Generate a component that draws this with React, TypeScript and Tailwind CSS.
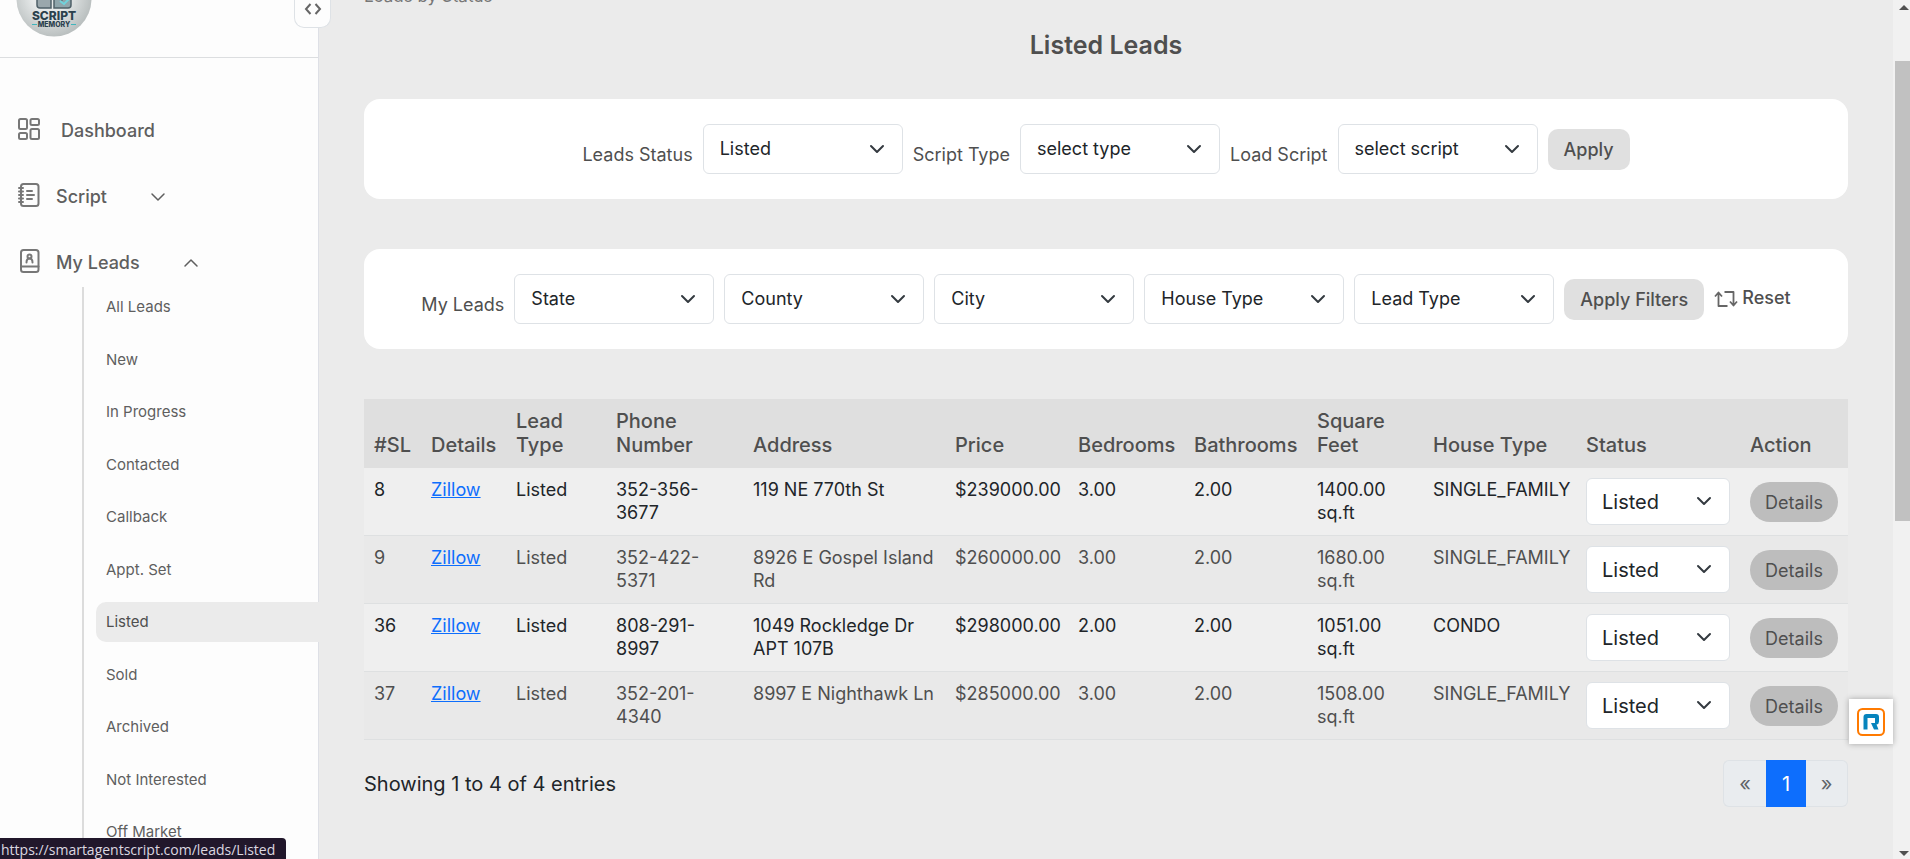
import { clsx } from "clsx";

const subLinks = [
  "All Leads",
  "New",
  "In Progress",
  "Contacted",
  "Callback",
  "Appt. Set",
  "Listed",
  "Sold",
  "Archived",
  "Not Interested",
  "Off Market",
];

const columns = [
  { title: "#SL", width: "w-[57px]" },
  { title: "Details", width: "w-[85px]" },
  { title: "Lead Type", width: "w-[100px]" },
  { title: "Phone Number", width: "w-[137px]" },
  { title: "Address", width: "w-[202px]" },
  { title: "Price", width: "w-[123px]" },
  { title: "Bedrooms", width: "w-[116px]" },
  { title: "Bathrooms", width: "w-[123px]" },
  { title: "Square Feet", width: "w-[116px]" },
  { title: "House Type", width: "w-[153px]" },
  { title: "Status", width: "w-[164px]" },
  { title: "Action", width: "w-[108px]" },
];

const leads = [
  { id: 8, phone: "352-356-3677", address: "119 NE 770th St", price: "$239000.00", beds: "3.00", baths: "2.00", sqft: "1400.00", house: "SINGLE_FAMILY" },
  { id: 9, phone: "352-422-5371", address: "8926 E Gospel Island Rd", price: "$260000.00", beds: "3.00", baths: "2.00", sqft: "1680.00", house: "SINGLE_FAMILY" },
  { id: 36, phone: "808-291-8997", address: "1049 Rockledge Dr APT 107B", price: "$298000.00", beds: "2.00", baths: "2.00", sqft: "1051.00", house: "CONDO" },
  { id: 37, phone: "352-201-4340", address: "8997 E Nighthawk Ln", price: "$285000.00", beds: "3.00", baths: "2.00", sqft: "1508.00", house: "SINGLE_FAMILY" },
];

function Chevron({ up = false, className = "" }: { up?: boolean; className?: string }) {
  return (
    <svg viewBox="0 0 16 16" fill="none" stroke="currentColor" strokeLinecap="round" strokeLinejoin="round" className={className}>
      <path d={up ? "m2 11 6-6 6 6" : "m2 5 6 6 6-6"} />
    </svg>
  );
}

function Select({ id, value, label }: { id: string; value: string; label?: string }) {
  return (
    <div className="relative w-[200px]">
      <select
        id={id}
        aria-label={label}
        className="h-[50px] w-full appearance-none rounded-md border border-[#dee2e6] bg-white pr-10 pb-px pl-4 text-lg text-[#212529]"
      >
        <option>{value}</option>
      </select>
      <Chevron className="pointer-events-none absolute top-[17px] right-[18px] size-4 stroke-2 text-[#343a40]" />
    </div>
  );
}

function DashboardIcon() {
  return (
    <svg viewBox="0 0 24 24" fill="none" stroke="#777" strokeWidth="2" className="size-6">
      <rect x="2" y="2" width="8" height="10" rx="1.5" />
      <rect x="13.5" y="2" width="8.5" height="6" rx="1.5" />
      <rect x="2" y="16" width="8" height="6" rx="1.5" />
      <rect x="13.5" y="12" width="8.5" height="10" rx="1.5" />
    </svg>
  );
}

function NotebookIcon() {
  return (
    <svg viewBox="0 0 24 24" fill="none" stroke="#777" strokeWidth="2" strokeLinecap="round" className="size-6">
      <rect x="4" y="1" width="17.5" height="22" rx="2.5" />
      <path d="M2 5h4M2 8.5h4M2 12h4M2 15.5h4M2 19h4M10 8h5M10 12h7M10 16h5" />
    </svg>
  );
}

function ContactIcon() {
  return (
    <svg viewBox="0 0 24 24" fill="none" stroke="#777" strokeWidth="2" strokeLinecap="round" className="size-6">
      <rect x="4" y="1" width="17.5" height="22" rx="2.5" />
      <path d="M4 17.5h17.5" />
      <circle cx="12.5" cy="7.5" r="2" />
      <path d="M9.5 13.5c0-2.5 1-4 3-4s3 1.500 3 4" />
    </svg>
  );
}

function Logo() {
  return (
    <svg viewBox="0 0 76 76" className="size-[76px] shrink-0" role="img" aria-label="Script Memory">
      <defs>
        <radialGradient id="disc" cx="45%" cy="45%" r="60%">
          <stop offset="0.4" stopColor="#e6e9e9" />
          <stop offset="1" stopColor="#b4baba" />
        </radialGradient>
      </defs>
      <circle cx="38" cy="38" r="37.5" fill="url(#disc)" />
      <path d="M21 30v14q0 3 3 3h11V38H24V30z" fill="#9aa7ac" stroke="#4f6068" strokeWidth="1.5" />
      <path d="M38 30v17h14q3 0 3-3V30l-9 9-4-4" fill="#8fa5ab" stroke="#4f6068" strokeWidth="1.5" />
      <path d="m44 40 4 3 8-8" fill="none" stroke="#6fd3dc" strokeWidth="2" />
      <text x="38" y="59" textAnchor="middle" fontSize="12" fontWeight="800" fill="#2b414d" fontFamily="Inter, sans-serif">
        SCRIPT
      </text>
      <path d="M16 63.5h5M55 63.5h5" stroke="#3fb5bd" />
      <text x="38" y="66" textAnchor="middle" fontSize="7" fontWeight="800" fill="#2b414d" fontFamily="Inter, sans-serif">
        MEMORY
      </text>
    </svg>
  );
}

function Sidebar() {
  return (
    <aside className="relative w-[319px] shrink-0 border-r border-[#dee0e6] bg-[#fdfdfd] text-[#5f5f5f]">
      <div className="flex h-[58px] items-end border-b border-[#dcdee0] pb-5 pl-4">
        <Logo />
      </div>
      <button
        aria-label="Collapse sidebar"
        className="absolute top-0 -right-[13px] flex h-7 w-[37px] items-start justify-center rounded-b-[10px] border border-t-0 border-[#dee2e6] bg-[#fdfdfd] pt-[3px] text-[#666]"
      >
        <svg viewBox="0 0 18 12" fill="none" stroke="currentColor" strokeWidth="2" className="h-3 w-[18px]">
          <path d="M6.5 1 2 6l4.500 5M11.500 1 16 6l-4.500 5" />
        </svg>
      </button>

      <nav className="pt-[51px] text-lg font-medium">
        <a href="#" className="flex h-10 items-center gap-5 pl-[17px]">
          <DashboardIcon />
          <span className="pt-1">Dashboard</span>
        </a>
        <button className="mt-[26px] flex h-10 items-center pl-[17px]">
          <NotebookIcon />
          <span className="ml-[15px] pt-1">Script</span>
          <Chevron className="mt-1 ml-[43px] size-4 stroke-[1.5]" />
        </button>
        <button className="mt-[26px] flex h-10 items-center pl-[17px]">
          <ContactIcon />
          <span className="ml-[15px] pt-1">My Leads</span>
          <Chevron up className="mt-1 ml-[43px] size-4 stroke-[1.5]" />
        </button>
        <ul className="mt-1.5 ml-[82px] flex h-[565px] flex-col justify-between border-l-2 border-[#dcdcdc] pl-3 text-[15px] font-normal">
          {subLinks.map((name) => (
            <li key={name}>
              <a
                href="#"
                className={clsx(
                  "-mr-px flex h-10 items-center rounded-l-[10px] pl-[10px]",
                  name === "Listed" && "bg-[#ebebeb] text-[#4f4f4f]"
                )}
              >
                {name}
              </a>
            </li>
          ))}
        </ul>
      </nav>
    </aside>
  );
}

function Filters() {
  return (
    <>
      <form className="flex h-[100px] items-center justify-center gap-[10px] rounded-2xl bg-white text-lg text-[#4f4f4f]">
        <label htmlFor="status" className="pt-[11px]">Leads Status</label>
        <Select id="status" value="Listed" />
        <label htmlFor="type" className="pt-[11px]">Script Type</label>
        <Select id="type" value="select type" />
        <label htmlFor="script" className="pt-[11px]">Load Script</label>
        <Select id="script" value="select script" />
        <button type="button" className="h-[41px] rounded-[10px] bg-[#e0e0e0] px-4 pt-0.5 font-medium">Apply</button>
      </form>

      <form className="mt-[50px] flex h-[100px] items-center justify-center gap-[10px] rounded-2xl bg-white text-lg text-[#4f4f4f]">
        <label htmlFor="state" className="pt-[11px]">My Leads</label>
        <Select id="state" value="State" />
        <Select id="county" value="County" label="County" />
        <Select id="city" value="City" label="City" />
        <Select id="house" value="House Type" label="House Type" />
        <Select id="lead" value="Lead Type" label="Lead Type" />
        <button type="button" className="h-[41px] rounded-[10px] bg-[#e0e0e0] px-4 pt-0.5 font-medium">Apply Filters</button>
        <button type="button" className="flex items-center gap-1 font-medium">
          <svg viewBox="0 0 24 24" fill="none" stroke="#666" strokeWidth="1.8" strokeLinejoin="round" className="size-6">
            <path d="M1 9.500 4.500 5.500 8 9.500M4.500 6v13h9M10.500 5h9v13M16 14.500l3.500 4 3.500-4" />
          </svg>
          <span className="pb-0.5">Reset</span>
        </button>
      </form>
    </>
  );
}

function LeadsTable() {
  return (
    <table className="mt-[50px] w-full table-fixed border-separate border-spacing-0 text-left text-lg leading-[23px]">
      <thead className="bg-[#dfdfdf] text-xl leading-6 text-[#4f4f4f]">
        <tr className="h-[69px]">
          {columns.map(({ title, width }) => (
            <th key={title} className={clsx(width, "px-[10px] pb-[11px] align-bottom font-medium")}>
              {title}
            </th>
          ))}
        </tr>
      </thead>
      <tbody>
        {leads.map((lead) => (
          <tr
            key={lead.id}
            className="h-[68px] align-top odd:bg-[#efefef] odd:text-[#212529] even:bg-[#e9e9e9] even:text-[#4f4f4f] [&>td]:border-b [&>td]:border-[#dee0e1] [&>td]:px-[10px] [&>td]:pt-[10px]"
          >
            <td>{lead.id}</td>
            <td>
              <a href="#" className="text-[#0d6efd] underline">Zillow</a>
            </td>
            <td>Listed</td>
            <td>{lead.phone}</td>
            <td>{lead.address}</td>
            <td>{lead.price}</td>
            <td>{lead.beds}</td>
            <td>{lead.baths}</td>
            <td>{lead.sqft} sq.ft</td>
            <td>{lead.house}</td>
            <td>
              <div className="relative">
                <select
                  aria-label={`Status of lead ${lead.id}`}
                  className="block h-[47px] w-full appearance-none rounded-md border border-[#dee2e6] bg-white pr-10 pl-[15px] text-xl text-[#212529]"
                >
                  <option>Listed</option>
                </select>
                <Chevron className="pointer-events-none absolute top-[15px] right-[18px] size-4 stroke-2 text-[#343a40]" />
              </div>
            </td>
            <td>
              <button className="mt-1 h-10 w-full rounded-full bg-[#bdbdbd] text-[#4f4f4f]">Details</button>
            </td>
          </tr>
        ))}
      </tbody>
    </table>
  );
}

export default function App() {
  return (
    <div className="relative flex h-screen overflow-hidden bg-[#ebebeb] font-['Inter',sans-serif]">
      <Sidebar />

      <main className="min-w-0 flex-1 px-[45px]">
        <p className="-mt-4 h-6 text-[17px] leading-6 text-[#777]">Leads by Status</p>
        <h1 className="mt-[22px] mb-[39px] text-center text-[25px] leading-[30px] font-semibold text-[#4f4f4f]">Listed Leads</h1>
        <Filters />
        <LeadsTable />
        <div className="mt-5 flex items-center justify-between text-xl text-[#212529]">
          <p>Showing 1 to 4 of 4 entries</p>
          <nav aria-label="Pages" className="flex h-[47px] text-[#5f6468]">
            <button aria-label="Previous" className="w-[43px] rounded-l-md border border-r-0 border-[#dee2e6] bg-[#e9ecef]">«</button>
            <button className="w-10 bg-[#0d6efd] text-white">1</button>
            <button aria-label="Next" className="w-[42px] rounded-r-md border border-l-0 border-[#dee2e6] bg-[#e9ecef]">»</button>
          </nav>
        </div>
      </main>

      {/* Scrollbar */}
      <div className="flex w-[17px] shrink-0 flex-col items-end bg-[#f1f1f1]">
        <svg viewBox="0 0 15 61" className="h-[61px] w-[15px]">
          <path d="M4 10h10L9 5z" fill="#505050" />
        </svg>
        <div className="h-[460px] w-[15px] bg-[#c1c1c1]" />
        <svg viewBox="0 0 15 17" className="mt-auto h-[17px] w-[15px]">
          <path d="M4 9h10l-5 5z" fill="#505050" />
        </svg>
      </div>

      {/* Dialer widget */}
      <button aria-label="Dialer" className="absolute right-[17px] bottom-[115px] flex h-[45px] w-11 items-center justify-center bg-white shadow-[0_0_6px_rgba(0,0,0,0.3)]">
        <svg viewBox="0 0 28 28" className="size-7">
          <rect x="1" y="1" width="26" height="26" rx="4.5" fill="#fff" stroke="#ff7a00" strokeWidth="2" />
          <path d="M6.500 21.500V9a3 3 0 0 1 3-3h9.500a3 3 0 0 1 3 3v4.500a3 3 0 0 1-2.500 3l2 5h-4.500L14 15h4V10h-7.500v11.500z" fill="#0684bd" />
        </svg>
      </button>

      {/* Link preview */}
      <div className="absolute bottom-0 left-0 h-[21px] w-[286px] rounded-tr bg-[#21172b] pl-px font-['Open_Sans',sans-serif] text-sm leading-6 whitespace-nowrap text-[#dcd8e0]">
        https://smartagentscript.com/leads/Listed
      </div>
    </div>
  );
}
